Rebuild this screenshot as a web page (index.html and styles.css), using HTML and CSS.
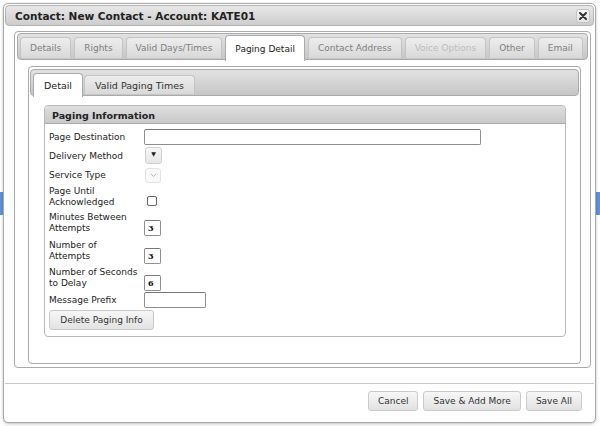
FILE: index.html
```html
<!DOCTYPE html>
<html lang="en">
<head>
  <meta charset="UTF-8" />
  <title>Contact: New Contact</title>
  <link rel="stylesheet" href="styles.css">
</head>
<body>

  <div class="dialog">
    <div class="titlebar">
      <span class="title">Contact: New Contact - Account: KATE01</span>
      <button class="close" title="Close">
        <svg width="8" height="8" viewBox="0 0 8 8"><path d="M1 1L7 7M7 1L1 7" stroke="#333" stroke-width="2" stroke-linecap="round"/></svg>
      </button>
    </div>

    <div class="dialog-body">
      <div class="tabs outer">
        <ul class="tab-nav">
          <li>Details</li>
          <li>Rights</li>
          <li>Valid Days/Times</li>
          <li class="active">Paging Detail</li>
          <li>Contact Address</li>
          <li class="disabled">Voice Options</li>
          <li>Other</li>
          <li>Email</li>
        </ul>
        <div class="tab-panel">
          <div class="tabs inner">
            <ul class="tab-nav">
              <li class="active">Detail</li>
              <li>Valid Paging Times</li>
            </ul>
            <div class="inner-panel">
              <div class="fieldset">
                <div class="fieldset-head">Paging Information</div>
                <div class="form-grid">
                  <label>Page Destination</label>
                  <input type="text" class="wide">

                  <label>Delivery Method</label>
                  <span class="select-btn">&#9660;</span>

                  <label>Service Type</label>
                  <span class="select-btn disabled">
                    <svg width="7" height="5" viewBox="0 0 7 5"><path d="M1 1L3.5 3.5L6 1" fill="none" stroke="#bbb" stroke-width="1"/></svg>
                  </span>

                  <label>Page Until<br>Acknowledged</label>
                  <span class="check"></span>

                  <label>Minutes Between<br>Attempts</label>
                  <input type="text" class="num" value="3">

                  <label>Number of<br>Attempts</label>
                  <input type="text" class="num" value="3">

                  <label>Number of Seconds<br>to Delay</label>
                  <input type="text" class="num" value="6">

                  <label>Message Prefix</label>
                  <input type="text" class="prefix">
                </div>
                <button class="btn delete">Delete Paging Info</button>
              </div>
            </div>
          </div>
        </div>
      </div>
    </div>

    <div class="footer">
      <button class="btn">Cancel</button>
      <button class="btn">Save &amp; Add More</button>
      <button class="btn">Save All</button>
    </div>
  </div>

</body>
</html>
```

FILE: styles.css
```css
body {
  margin: 0;
  font-family: "DejaVu Sans", Verdana, sans-serif;
  font-size: 9px;
  color: #222;
  background: linear-gradient(to bottom, #fff 192px, #5a93dc 192px, #5a93dc 215px, #fff 215px);
  height: 426px;
  overflow: hidden;
}

.dialog {
  margin: 3px 4px 0 3px;
  height: 420px;
  box-sizing: border-box;
  border: 1px solid #a9a9a9;
  border-radius: 5px;
  padding: 1px;
  background: #fff;
  display: flex;
  flex-direction: column;
  box-shadow: 0 1px 3px rgba(0, 0, 0, 0.25);
}

.titlebar {
  height: 21px;
  box-sizing: border-box;
  border: 1px solid #b3b3b3;
  border-radius: 4px;
  background: linear-gradient(#e8e8e8, #cdcdcd);
  display: flex;
  align-items: center;
  justify-content: space-between;
  padding: 0 3px 0 9px;
}

.title {
  font-weight: bold;
  font-size: 10.5px;
  color: #222;
}

.close {
  width: 14px;
  height: 14px;
  padding: 0;
  border: 1px solid #c4c4c4;
  border-radius: 3px;
  background: linear-gradient(#f6f6f6, #e4e4e4);
  display: flex;
  align-items: center;
  justify-content: center;
}

.dialog-body {
  flex: 1;
  padding: 5px 3px 15px 9px;
  display: flex;
}

.tabs {
  border: 1px solid #aaa;
  border-radius: 4px;
  display: flex;
  flex-direction: column;
  box-sizing: border-box;
}

.tabs.outer {
  flex: 1;
  padding: 1px 2px 3px;
}

.tab-nav {
  list-style: none;
  margin: 0;
  height: 27px;
  box-sizing: border-box;
  border: 1px solid #aaa;
  border-radius: 4px;
  background: linear-gradient(#e2e2e2, #c6c6c6);
  display: flex;
  align-items: flex-start;
  gap: 3px;
  padding: 1px 2px 0;
}

.tab-nav li {
  height: 21px;
  margin-top: 2px;
  box-sizing: border-box;
  padding: 0 9px;
  border: 1px solid #c4c4c4;
  border-bottom: none;
  border-radius: 4px 4px 0 0;
  background: linear-gradient(#ededed, #d9d9d9);
  color: #808080;
  display: flex;
  align-items: center;
  white-space: nowrap;
}

.tab-nav li.disabled {
  color: #bdbdbd;
}

.tab-nav li.active {
  height: 26px;
  margin-top: 0;
  background: #fff;
  color: #222;
  border-color: #aaa;
}

.tab-panel {
  flex: 1;
  display: flex;
  padding: 6px 7px 0 11px;
}

.tabs.inner {
  flex: 1;
  padding: 2px 1px 1px;
}

.tabs.inner .tab-nav {
  gap: 1px;
  padding: 3px 2px 0;
}

.tabs.inner .tab-nav li {
  height: 19px;
  margin-top: 2px;
  padding: 0 10px;
  color: #333;
  font-size: 9.5px;
}

.tabs.inner .tab-nav li.active {
  height: 24px;
  margin-top: 0;
  color: #222;
}

.inner-panel {
  padding: 9px 13px 0 14px;
}

.fieldset {
  height: 232px;
  box-sizing: border-box;
  border: 1px solid #b9b9b9;
  border-radius: 4px;
}

.fieldset-head {
  height: 18px;
  box-sizing: border-box;
  border-bottom: 1px solid #aaa;
  border-radius: 3px 3px 0 0;
  background: linear-gradient(#dedede, #c9c9c9);
  font-weight: bold;
  font-size: 9.5px;
  padding: 4px 7px 0;
}

.form-grid {
  display: grid;
  grid-template-columns: 95px 1fr;
  grid-template-rows: 16px 19px 19px 27px 26px 28px 27px 17px;
  align-items: end;
  padding: 5px 4px 0;
}

.form-grid label {
  line-height: 11px;
  margin-bottom: 2px;
  color: #222;
}

.form-grid input {
  box-sizing: border-box;
  height: 16px;
  border: 1px solid #8e8e8e;
  border-top-color: #777;
  border-radius: 2px;
  padding: 0 3px;
  font-family: "DejaVu Serif", serif;
  font-size: 8px;
  font-weight: bold;
  background: #fff;
  margin: 0;
}

.form-grid input.wide {
  width: 337px;
}

.form-grid input.num {
  width: 17px;
}

.form-grid input.prefix {
  width: 62px;
}

.select-btn {
  width: 17px;
  height: 17px;
  margin-left: 1px;
  box-sizing: border-box;
  border: 1px solid #d0d0d0;
  border-radius: 3px;
  background: linear-gradient(#f7f7f7, #e6e6e6);
  display: flex;
  justify-content: center;
  align-items: flex-start;
  padding-top: 2px;
  font-size: 6px;
  color: #222;
}

.select-btn.disabled {
  width: 16px;
  height: 15px;
  border-color: #e2e2e2;
  background: #fafafa;
  align-items: center;
  padding-top: 0;
}

.check {
  width: 10px;
  height: 10px;
  margin: 0 0 4px 3px;
  border: 1px solid #666;
  border-radius: 2px;
  box-sizing: border-box;
  background: #fff;
}

.btn {
  height: 20px;
  box-sizing: border-box;
  border: 1px solid #cacaca;
  border-radius: 3px;
  background: linear-gradient(#f7f7f7, #e2e2e2);
  font-family: "DejaVu Sans", Verdana, sans-serif;
  font-size: 9px;
  color: #333;
  padding: 0 9px;
}

.btn.delete {
  margin: 2px 0 0 4px;
  width: 105px;
  padding: 0;
}

.footer {
  height: 38px;
  box-sizing: border-box;
  border-top: 1px solid #c8c8c8;
  display: flex;
  justify-content: flex-end;
  align-items: flex-start;
  gap: 5px;
  padding: 7px 12px 0;
}
```
